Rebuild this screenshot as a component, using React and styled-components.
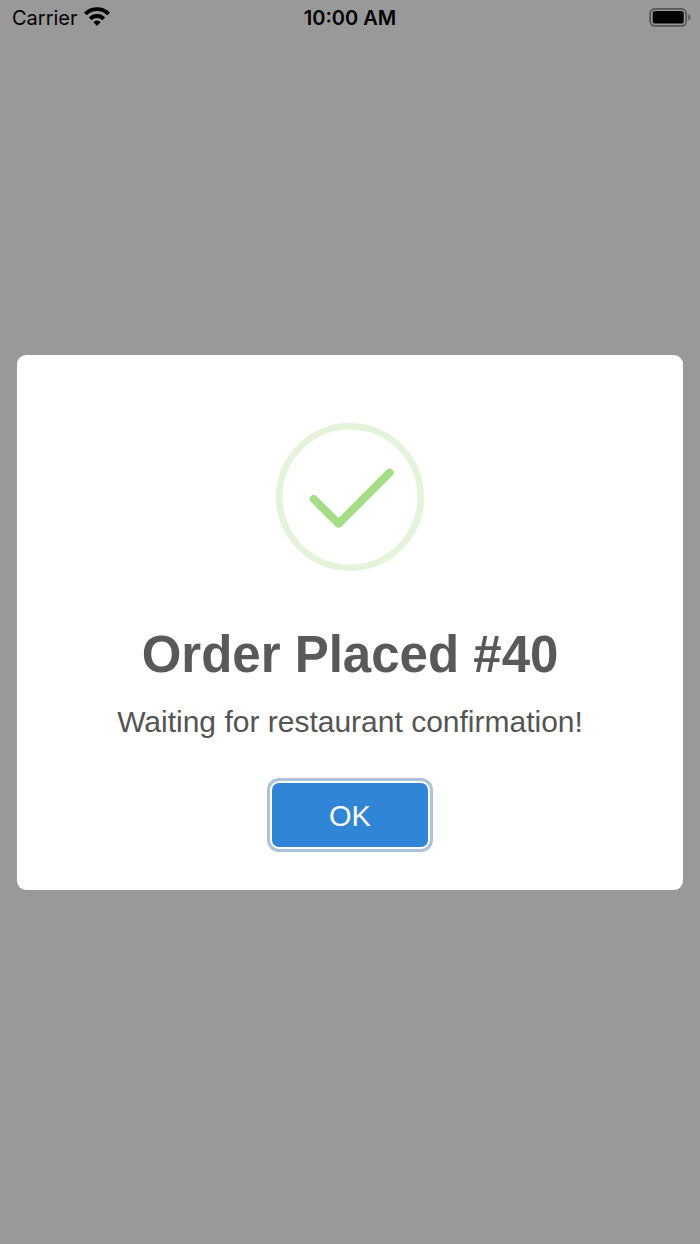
import React from "react";
import styled, { createGlobalStyle } from "styled-components";

const GlobalStyle = createGlobalStyle`
  *, *::before, *::after { box-sizing: border-box; }
  body {
    margin: 0;
    background: #999999;
    font-family: "Liberation Sans", Arial, sans-serif;
  }
`;

const Screen = styled.div`
  display: flex;
  flex-direction: column;
  min-height: 100vh;
`;

const StatusBar = styled.header`
  display: grid;
  grid-template-columns: 1fr auto 1fr;
  align-items: center;
  height: 36px;
  padding: 0 9px;
  color: #000000;
  font-family: Inter, sans-serif;
  font-size: 20px;
  line-height: 24px;
`;

const Network = styled.div`
  display: flex;
  align-items: center;
  gap: 6px;
  padding-left: 3px;
`;

const Clock = styled.time`
  font-weight: 600;
`;

const Battery = styled.svg`
  display: block;
  justify-self: end;
`;

const Overlay = styled.main`
  position: fixed;
  inset: 0;
  display: flex;
  align-items: center;
  justify-content: center;
  padding: 17px;
`;

const Modal = styled.section`
  display: flex;
  flex-direction: column;
  align-items: center;
  width: 100%;
  padding: 68px 20px 43px;
  border-radius: 9px;
  background: #ffffff;
  text-align: center;
`;

const SuccessIcon = styled.svg`
  display: block;
  margin-bottom: 54px;
`;

const Title = styled.h1`
  margin: 0 0 19px;
  color: #595959;
  font-size: 51px;
  line-height: 60px;
  font-weight: 700;
`;

const Message = styled.p`
  margin: 0 0 43px;
  color: #545454;
  font-size: 30px;
  line-height: 36px;
`;

const ConfirmButton = styled.button`
  min-width: 156px;
  height: 64px;
  padding: 2px 40px 0;
  border: 0;
  border-radius: 7px;
  background: #3085d6;
  color: #ffffff;
  font-family: inherit;
  font-size: 29px;
  line-height: 36px;
  cursor: pointer;
  outline: none;
  box-shadow: 0 0 0 2px #ffffff, 0 0 0 5px #adc2da;
`;

function WifiIcon() {
  return (
    <svg width="26" height="22" viewBox="0 0 26 22" aria-hidden="true">
      <g fill="none" stroke="#000000" strokeWidth="3.8">
        <path d="M1.3 6.9A16.6 16.6 0 0 1 24.7 6.9" />
        <path d="M6.2 11.8A9.6 9.6 0 0 1 19.8 11.8" />
      </g>
      <path d="M9.3 15.1A5.2 5.2 0 0 1 16.7 15.1L13.5 18.4Q13 18.9 12.5 18.4Z" fill="#000000" />
    </svg>
  );
}

export default function App() {
  return (
    <>
      <GlobalStyle />
      <Screen>
        <StatusBar>
          <Network>
            <span>Carrier</span>
            <WifiIcon />
          </Network>
          <Clock dateTime="10:00">10:00 AM</Clock>
          <Battery width="42" height="20" viewBox="0 0 42 20" role="img" aria-label="Battery full">
            <rect x="1.2" y="0.9" width="36" height="17" rx="4.6" fill="none" stroke="#555555" strokeWidth="1.7" />
            <rect x="3.7" y="3.1" width="31" height="12.5" rx="2.2" fill="#000000" />
            <path d="M39.3 6.3Q41.5 7.4 41.5 9.4T39.3 12.5Z" fill="#555555" />
          </Battery>
        </StatusBar>
        <Overlay>
          <Modal role="dialog" aria-modal="true" aria-labelledby="order-title" aria-describedby="order-message">
            <SuccessIcon width="148" height="148" viewBox="0 0 148 148" fill="none" aria-hidden="true">
              <circle cx="74" cy="74" r="70.7" stroke="#e3f4da" strokeWidth="6.6" />
              <path
                d="M37.7 76L62.6 100.7L113.6 49.7"
                stroke="#a5dc86"
                strokeWidth="8"
                strokeLinecap="round"
                strokeLinejoin="round"
              />
            </SuccessIcon>
            <Title id="order-title">Order Placed #40</Title>
            <Message id="order-message">Waiting for restaurant confirmation!</Message>
            <ConfirmButton type="button">OK</ConfirmButton>
          </Modal>
        </Overlay>
      </Screen>
    </>
  );
}
